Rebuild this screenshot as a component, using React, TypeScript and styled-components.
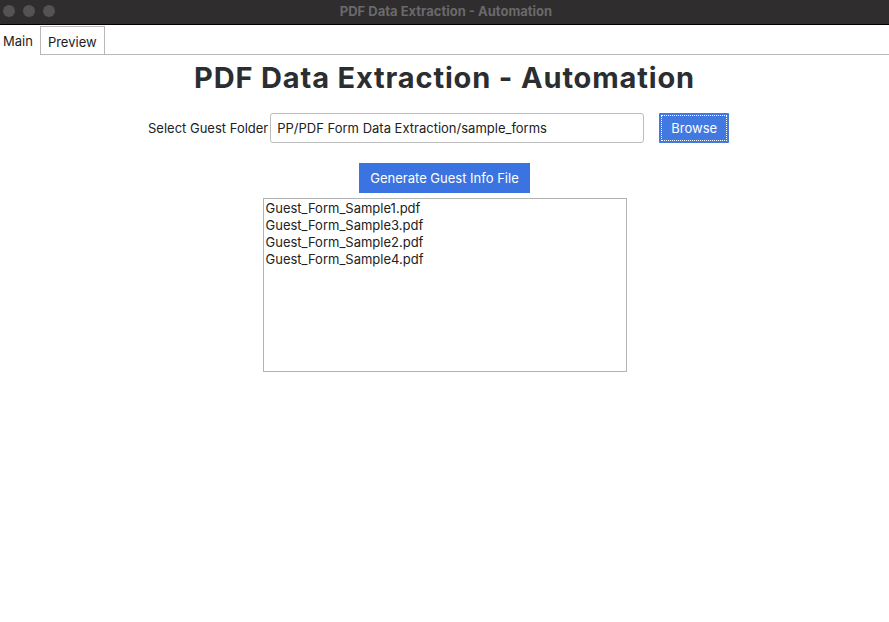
import React from "react";
import styled, { createGlobalStyle } from "styled-components";

const Global = createGlobalStyle`
  html, body { margin: 0; padding: 0; background: #ffffff; }
  body { font-family: Inter, "Noto Sans", sans-serif; width: 889px; height: 622px; overflow: hidden; }
  * { box-sizing: border-box; }
`;

const Window = styled.div`
  width: 889px;
  height: 622px;
  display: flex;
  flex-direction: column;
  background: #fff;
`;

const TitleBar = styled.div`
  height: 25px;
  background: #2f2d2e;
  border-bottom: 1px solid #000;
  display: grid;
  grid-template-columns: 1fr auto 1fr;
  align-items: center;
  padding: 0 0 2px 3px;
`;

const Lights = styled.div`
  display: flex;
  gap: 8px;
`;

const Light = styled.span`
  width: 12px;
  height: 12px;
  border-radius: 50%;
  background: #545354;
`;

const Title = styled.div`
  font-size: 13px;
  font-weight: 700;
  color: #6a696a;
  padding-bottom: 1px;
`;

const TabBar = styled.div`
  display: flex;
  align-items: flex-end;
  height: 30px;
`;

const Tab = styled.div<{ $active?: boolean }>`
  height: ${(p) => (p.$active ? "30px" : "29px")};
  padding: 2px 7px 0 ${(p) => (p.$active ? "3px" : "7px")};
  display: flex;
  align-items: center;
  font-size: 13px;
  color: #1c1c1c;
  border: ${(p) => (p.$active ? "none" : "1px solid #b8b8b8")};
`;

const TabFill = styled.div`
  flex: 1;
  border-bottom: 1px solid #b8b8b8;
`;

const Content = styled.div`
  display: flex;
  flex-direction: column;
  align-items: center;
`;

const Heading = styled.h1`
  margin: 4px 0 0 0;
  font-size: 29px;
  font-weight: 700;
  color: #2b2e31;
  line-height: 38px;
  letter-spacing: 0.85px;
`;

const FolderRow = styled.div`
  align-self: stretch;
  display: flex;
  align-items: center;
  padding-left: 148px;
  margin-top: 16px;
`;

const Label = styled.label`
  font-size: 13px;
  color: #222;
  margin-right: 2px;
`;

const PathInput = styled.div`
  width: 374px;
  height: 30px;
  border: 1px solid #bcbcbc;
  border-radius: 3px;
  display: flex;
  align-items: center;
  padding-left: 6px;
  font-size: 13px;
  color: #222;
`;

const BrowseButton = styled.button`
  margin-left: 15px;
  width: 70px;
  height: 30px;
  background: #4279e1;
  border: none;
  border-radius: 1px;
  color: #fff;
  font-family: Inter, sans-serif;
  font-size: 13px;
  padding: 2px;
  display: flex;
`;

const FocusRing = styled.span`
  flex: 1;
  border: 1px dotted #fff;
  display: flex;
  align-items: center;
  justify-content: center;
`;

const GenerateButton = styled.button`
  margin-top: 20px;
  width: 171px;
  height: 30px;
  background: #3b74e1;
  border: none;
  color: #fff;
  font-family: Inter, sans-serif;
  font-size: 13px;
`;

const FileList = styled.div`
  margin-top: 5px;
  width: 364px;
  height: 174px;
  border: 1px solid #b3b3b3;
  padding: 1px 2px;
  display: flex;
  flex-direction: column;
`;

const FileItem = styled.div`
  font-size: 13px;
  line-height: 17px;
  color: #222;
`;

const files = [
  "Guest_Form_Sample1.pdf",
  "Guest_Form_Sample3.pdf",
  "Guest_Form_Sample2.pdf",
  "Guest_Form_Sample4.pdf",
];

export default function App() {
  return (
    <Window>
      <Global />
      <TitleBar>
        <Lights>
          <Light />
          <Light />
          <Light />
        </Lights>
        <Title>PDF Data Extraction - Automation</Title>
        <span />
      </TitleBar>
      <TabBar>
        <Tab $active>Main</Tab>
        <Tab>Preview</Tab>
        <TabFill />
      </TabBar>
      <Content>
        <Heading>PDF Data Extraction - Automation</Heading>
        <FolderRow>
          <Label>Select Guest Folder</Label>
          <PathInput>PP/PDF Form Data Extraction/sample_forms</PathInput>
          <BrowseButton>
            <FocusRing>Browse</FocusRing>
          </BrowseButton>
        </FolderRow>
        <GenerateButton>Generate Guest Info File</GenerateButton>
        <FileList>
          {files.map((f) => (
            <FileItem key={f}>{f}</FileItem>
          ))}
        </FileList>
      </Content>
    </Window>
  );
}
